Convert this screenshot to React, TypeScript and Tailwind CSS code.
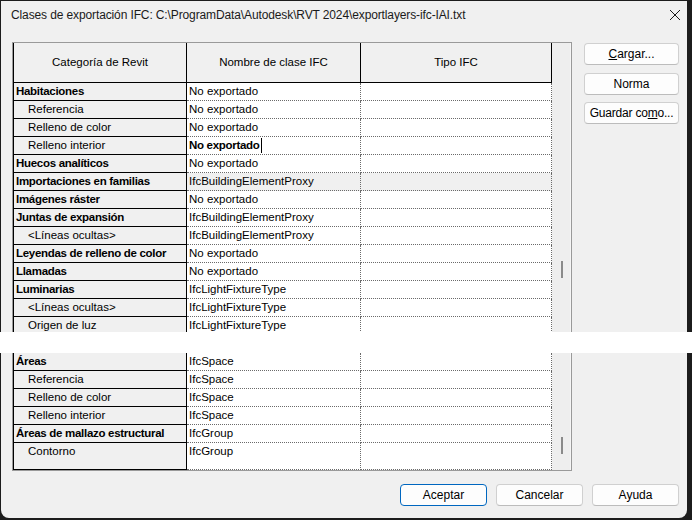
import React from "react";

type Row = { cat: string; sub?: boolean; ifc: string; gray?: boolean; caret?: boolean; blank?: boolean; tall?: boolean };

const rows: Row[] = [
  { cat: "Habitaciones", ifc: "No exportado" },
  { cat: "Referencia", sub: true, ifc: "No exportado" },
  { cat: "Relleno de color", sub: true, ifc: "No exportado" },
  { cat: "Relleno interior", sub: true, ifc: "No exportado", caret: true },
  { cat: "Huecos analíticos", ifc: "No exportado" },
  { cat: "Importaciones en familias", ifc: "IfcBuildingElementProxy", gray: true },
  { cat: "Imágenes ráster", ifc: "No exportado" },
  { cat: "Juntas de expansión", ifc: "IfcBuildingElementProxy" },
  { cat: "<Líneas ocultas>", sub: true, ifc: "IfcBuildingElementProxy" },
  { cat: "Leyendas de relleno de color", ifc: "No exportado" },
  { cat: "Llamadas", ifc: "No exportado" },
  { cat: "Luminarias", ifc: "IfcLightFixtureType" },
  { cat: "<Líneas ocultas>", sub: true, ifc: "IfcLightFixtureType" },
  { cat: "Origen de luz", sub: true, ifc: "IfcLightFixtureType" },
  { cat: "", ifc: "", blank: true },
  { cat: "Áreas", ifc: "IfcSpace" },
  { cat: "Referencia", sub: true, ifc: "IfcSpace" },
  { cat: "Relleno de color", sub: true, ifc: "IfcSpace" },
  { cat: "Relleno interior", sub: true, ifc: "IfcSpace" },
  { cat: "Áreas de mallazo estructural", ifc: "IfcGroup" },
  { cat: "Contorno", sub: true, ifc: "IfcGroup", tall: true },
];

function Btn({ children, primary, w }: { children: React.ReactNode; primary?: boolean; w: string }) {
  return (
    <div
      className={`${w} h-[22px] flex items-center justify-center rounded-[4px] bg-[#fdfdfd] text-[12px] text-black border ${
        primary ? "border-[#0067c0]" : "border-[#d0d0d0] border-b-[#bcbcbc]"
      }`}
    >
      {children}
    </div>
  );
}

export default function App() {
  return (
    <div
      className="relative w-[692px] h-[520px] bg-[#1c1c1c] pl-[1px] pt-[1px] overflow-hidden"
      style={{ fontFamily: '"Liberation Sans", Arial, sans-serif' }}
    >
      <div className="w-[686px] h-[517px] bg-[#f0f0f0] rounded-b-[8px] flex flex-col">
        {/* title bar */}
        <div className="h-[31px] flex items-center justify-between pl-[10px] pr-[6px] pb-[3px]">
          <span className="text-[12px] tracking-[-0.12px] text-[#1a1a1a]">
            Clases de exportación IFC: C:\ProgramData\Autodesk\RVT 2024\exportlayers-ifc-IAI.txt
          </span>
          <svg width="12" height="12" viewBox="0 0 12 12">
            <path d="M1 1 L11 11 M11 1 L1 11" stroke="#1a1a1a" strokeWidth="1" />
          </svg>
        </div>

        <div className="flex pl-[11px] pt-[10px]">
          {/* grid frame */}
          <div className="flex border border-[#9a9a9a] bg-white">
            <div className="w-[539px] border-l border-black text-[11.5px] leading-[15px] text-black">
              {/* header */}
              <div className="flex h-[40px] bg-[#f0f0f0]">
                <div className="w-[173px] border-r border-b border-black flex items-center justify-center">
                  Categoría de Revit
                </div>
                <div className="w-[174px] border-r border-b border-black flex items-center justify-center">
                  Nombre de clase IFC
                </div>
                <div className="w-[191px] border-r border-b border-black flex items-center justify-center">
                  Tipo IFC
                </div>
              </div>
              {rows.map((r, i) => (
                <div key={i} className={`flex ${r.tall ? "h-[27px]" : "h-[18px]"}`}>
                  <div
                    className={`w-[173px] bg-[#f0f0f0] border-r border-b border-black flex items-start pt-[1px] whitespace-nowrap ${
                      r.sub ? "pl-[14px]" : "pl-[2px] font-bold tracking-[-0.3px]"
                    }`}
                  >
                    {r.cat}
                  </div>
                  <div
                    className={`w-[174px] border-r border-b border-dotted border-[#6a6a6a] flex items-start pt-[1px] pl-[2px] whitespace-nowrap ${
                      r.gray ? "bg-[#f0f0f0]" : "bg-white"
                    } ${r.caret ? "font-bold tracking-[-0.3px]" : ""}`}
                  >
                    {r.ifc}
                    {r.caret && <span className="inline-block w-[1px] h-[15px] bg-black ml-[1px]" />}
                  </div>
                  <div
                    className={`w-[191px] border-r border-b border-dotted border-[#6a6a6a] ${
                      r.gray ? "bg-[#f0f0f0]" : "bg-white"
                    }`}
                  />
                </div>
              ))}
            </div>
            {/* scrollbar */}
            <div className="relative w-[19px] bg-[#eeeeee] border-r border-[#f6f6f6]">
              <div className="absolute left-[9px] top-[218px] w-[2px] h-[17px] bg-[#8a8a8a]" />
              <div className="absolute left-[9px] top-[394px] w-[2px] h-[17px] bg-[#8a8a8a]" />
            </div>
          </div>

          {/* side buttons */}
          <div className="ml-[12px] flex flex-col pt-[1px]">
            <Btn w="w-[95px]">
              <span>
                <span className="underline">C</span>argar...
              </span>
            </Btn>
            <div className="h-[8px]" />
            <Btn w="w-[95px]">Norma</Btn>
            <div className="h-[7px]" />
            <Btn w="w-[95px]">
              <span className="tracking-[-0.2px]">
                Guardar co<span className="underline">m</span>o...
              </span>
            </Btn>
          </div>
        </div>

        {/* bottom buttons */}
        <div className="flex justify-end gap-[9px] pr-[8px] mt-[13px]">
          <Btn w="w-[87px]" primary>
            Aceptar
          </Btn>
          <Btn w="w-[87px]">Cancelar</Btn>
          <Btn w="w-[87px]">Ayuda</Btn>
        </div>
      </div>

      {/* white band across the capture */}
      <div className="absolute left-0 top-[332px] w-[692px] h-[21px] bg-white" />
    </div>
  );
}
